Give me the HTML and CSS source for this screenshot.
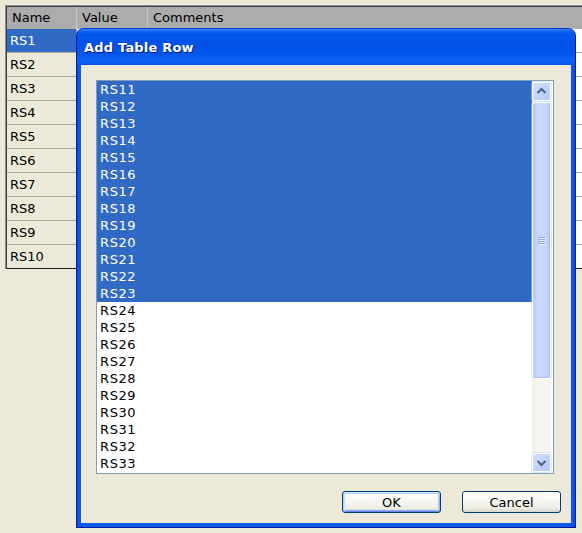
FILE: index.html
```html
<!DOCTYPE html>
<html>
<head>
<meta charset="utf-8">
<link rel="stylesheet" href="styles.css">
</head>
<body>
<div class="screen">
  <div class="table">
    <div class="thead">
      <div class="th c1">Name</div>
      <div class="th c2">Value</div>
      <div class="th c3">Comments</div>
    </div>
    <div class="tr sel"><div class="td c1">RS1</div><div class="td c2"></div><div class="td c3"></div></div>
    <div class="tr"><div class="td c1">RS2</div><div class="td c2"></div><div class="td c3"></div></div>
    <div class="tr"><div class="td c1">RS3</div><div class="td c2"></div><div class="td c3"></div></div>
    <div class="tr"><div class="td c1">RS4</div><div class="td c2"></div><div class="td c3"></div></div>
    <div class="tr"><div class="td c1">RS5</div><div class="td c2"></div><div class="td c3"></div></div>
    <div class="tr"><div class="td c1">RS6</div><div class="td c2"></div><div class="td c3"></div></div>
    <div class="tr"><div class="td c1">RS7</div><div class="td c2"></div><div class="td c3"></div></div>
    <div class="tr"><div class="td c1">RS8</div><div class="td c2"></div><div class="td c3"></div></div>
    <div class="tr"><div class="td c1">RS9</div><div class="td c2"></div><div class="td c3"></div></div>
    <div class="tr last"><div class="td c1">RS10</div><div class="td c2"></div><div class="td c3"></div></div>
  </div>

  <div class="dialog">
    <div class="titlebar">Add Table Row</div>
    <div class="dbody">
      <div class="listbox">
        <div class="items">
          <div class="item sel">RS11</div>
          <div class="item sel">RS12</div>
          <div class="item sel">RS13</div>
          <div class="item sel">RS14</div>
          <div class="item sel">RS15</div>
          <div class="item sel">RS16</div>
          <div class="item sel">RS17</div>
          <div class="item sel">RS18</div>
          <div class="item sel">RS19</div>
          <div class="item sel">RS20</div>
          <div class="item sel">RS21</div>
          <div class="item sel">RS22</div>
          <div class="item sel">RS23</div>
          <div class="item">RS24</div>
          <div class="item">RS25</div>
          <div class="item">RS26</div>
          <div class="item">RS27</div>
          <div class="item">RS28</div>
          <div class="item">RS29</div>
          <div class="item">RS30</div>
          <div class="item">RS31</div>
          <div class="item">RS32</div>
          <div class="item">RS33</div>
        </div>
        <div class="vscroll">
          <div class="sbtn">
            <svg width="19" height="19" viewBox="0 0 19 19"><path d="M5.5 11 L9.5 7 L13.5 11" fill="none" stroke="#4D6185" stroke-width="2"/></svg>
          </div>
          <div class="thumb"><div class="grip"><i></i><i></i><i></i><i></i></div></div>
          <div class="track"></div>
          <div class="sbtn">
            <svg width="19" height="19" viewBox="0 0 19 19"><path d="M5.5 8 L9.5 12 L13.5 8" fill="none" stroke="#4D6185" stroke-width="2"/></svg>
          </div>
        </div>
      </div>
      <div class="buttons">
        <button class="btn default">OK</button>
        <button class="btn">Cancel</button>
      </div>
    </div>
  </div>
</div>
</body>
</html>
```

FILE: styles.css
```css
html, body {
  margin: 0;
  padding: 0;
}
body {
  background: #ECE9D8;
  font-family: "DejaVu Sans", "Liberation Sans", sans-serif;
  font-size: 13px;
  color: #000;
}
.screen {
  position: relative;
  width: 582px;
  height: 533px;
  overflow: hidden;
  padding-top: 5px;
  padding-left: 5px;
  box-sizing: border-box;
}

/* Table */
.table {
  width: 640px;
  border-top: 1px solid #8E8E8E;
  border-left: 1px solid #8E8E8E;
  box-shadow: inset 1px 1px 0 #404040;
  padding: 1px 0 0 1px;
}
.thead {
  display: flex;
  height: 22px;
  background: #ACACAC;
}
.th {
  line-height: 22px;
  padding-left: 5px;
  box-sizing: border-box;
  border-right: 1px solid #C4C4C4;
}
.c1 { width: 70px; flex: none; }
.c2 { width: 71px; flex: none; }
.c3 { flex: 1; border-right: none; }
.tr {
  display: flex;
  height: 24px;
}
.td {
  box-sizing: border-box;
  height: 24px;
  line-height: 23px;
  border-bottom: 1px solid #ACA899;
  border-right: 1px solid #ACA899;
  background: #FFFFFF;
}
.td.c1 {
  padding-left: 3px;
  background: #ECE9D8;
}
.tr.sel .td.c1 {
  background: #316AC5;
  color: #FFFFFF;
}
.tr.last .td {
  border-bottom-color: #202020;
}

/* Dialog */
.dialog {
  position: absolute;
  left: 76px;
  top: 28px;
  width: 500px;
  height: 500px;
  box-sizing: border-box;
  background: linear-gradient(to right, #0A4FE0 0, #0A58EA 2px, #0A58EA 497px, #0842D0 100%);
  border: 1px solid #0831D9;
  border-bottom-color: #001A9C;
  border-left-color: #0019B0;
  border-right-color: #0019B0;
  border-radius: 8px 8px 0 0;
  padding: 0 4px 4px 4px;
  display: flex;
  flex-direction: column;
}
.titlebar {
  margin: 0 -4px;
  height: 36px;
  flex: none;
  border-radius: 7px 7px 0 0;
  background: linear-gradient(to bottom,
    #3D8CF8 0px, #1468F3 2px, #0356EC 5px, #0052E8 14px,
    #0055EA 24px, #0A62F4 31px, #0A5EF0 34px, #0550E0 36px);
  color: #FFFFFF;
  font-weight: bold;
  font-size: 13px;
  letter-spacing: 0.2px;
  line-height: 38px;
  padding-left: 7px;
  text-shadow: 1px 1px 0 #0A1883;
}
.dbody {
  flex: 1;
  background: #ECE9D8;
  padding: 15px 10px 9px 15px;
  display: flex;
  flex-direction: column;
}

/* Listbox */
.listbox {
  width: 458px;
  height: 394px;
  box-sizing: border-box;
  border: 1px solid #7F9DB9;
  background: #FFFFFF;
  display: flex;
}
.items {
  width: 435px;
  flex: none;
}
.item {
  height: 17px;
  line-height: 17px;
  padding-left: 3px;
  letter-spacing: 0.6px;
}
.item.sel {
  background: #316AC5;
  color: #FFFFFF;
}
.vscroll {
  width: 21px;
  flex: none;
  box-sizing: border-box;
  padding: 1px 2px 1px 0;
  display: flex;
  flex-direction: column;
  background: #FFFFFF;
}
.sbtn {
  width: 19px;
  height: 19px;
  flex: none;
  box-sizing: border-box;
  border: 1px solid #FFFFFF;
  border-radius: 2px;
  background: linear-gradient(135deg, #D6E1FD 0%, #C2D3FC 50%, #B4C8F6 100%);
  box-shadow: 0 0 0 0.5px #C5D3F2;
  display: flex;
}
.sbtn svg {
  margin: -1px;
}
.thumb {
  margin-top: 1px;
  height: 277px;
  flex: none;
  box-sizing: border-box;
  border: 1px solid #FFFFFF;
  border-radius: 2px;
  background: linear-gradient(to right, #B8CAF6 0%, #CBD9FC 35%, #C6D5FB 70%, #B8CBF7 100%);
  box-shadow: inset -1px -1px 0 #A6BBEE, 0 0 0 0.5px #B8C8EE;
  display: flex;
  align-items: center;
  justify-content: center;
}
.grip {
  display: flex;
  flex-direction: column;
  gap: 1px;
}
.grip i {
  display: block;
  width: 7px;
  height: 1px;
  background: #8CA5E4;
  box-shadow: 1px 1px 0 #EEF3FE;
}
.track {
  flex: 1;
  background: linear-gradient(to right, #EEEDE6 0%, #F6F5F0 30%, #F4F3EE 100%);
}

/* Buttons */
.buttons {
  margin-top: 17px;
  display: flex;
  justify-content: flex-end;
  gap: 21px;
}
.btn {
  width: 99px;
  height: 22px;
  box-sizing: border-box;
  border: 1px solid #003C74;
  border-radius: 3px;
  background: linear-gradient(to bottom, #FFFFFF 0%, #F7F7F4 40%, #EDEDE7 80%, #D8D4CA 100%);
  font-family: "DejaVu Sans", "Liberation Sans", sans-serif;
  font-size: 13px;
  color: #000;
  padding: 0;
  line-height: 19px;
}
.btn.default {
  box-shadow: inset 0 1px 0 #CEE7FF, inset 1px 0 0 #BCD4F6, inset -1px 0 0 #9CB7EC, inset 0 -1px 0 #6982EE,
              inset 0 2px 0 #BCD4F6, inset 2px 0 0 #CEE0FA, inset -2px 0 0 #B0C8F3, inset 0 -2px 0 #8DA9EC;
}
```
